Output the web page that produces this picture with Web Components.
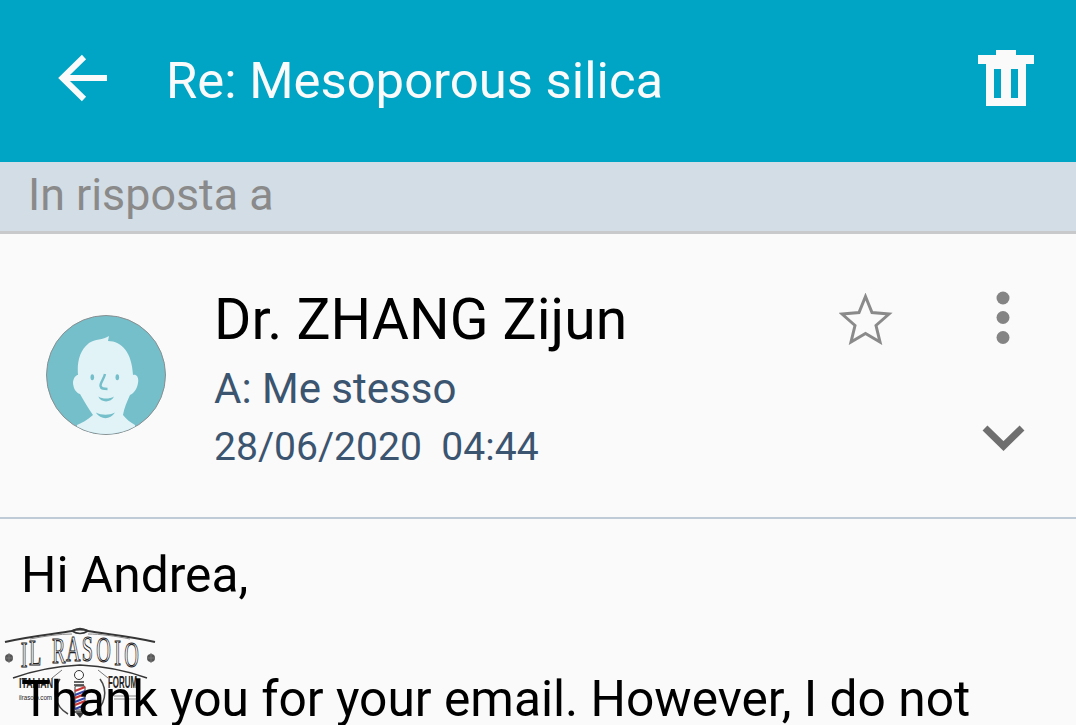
<!DOCTYPE html>
<html><head><meta charset="utf-8"><style>
html,body{margin:0;padding:0;background:#fafafa;overflow:hidden;height:725px}
body{font-family:Roboto,sans-serif}
</style></head><body>
<mail-screen></mail-screen>
<script>
function def(name,html){customElements.define(name,class extends HTMLElement{constructor(){super();this.attachShadow({mode:'open'}).innerHTML=html;}});}
def('app-bar',`<style>:host{display:flex;align-items:center;height:162px;background:#00a5c5;color:#fafafa;box-sizing:border-box;padding:0 42px 0 58px}
svg{display:block;flex:none}.t{font-size:50.800px;flex:1;white-space:nowrap;position:relative;top:-1px;margin-left:59px}</style>
<svg width="49" height="48" viewBox="0 0 49 48" style="margin-top:-6px"><path d="M49 24H5M26 3L4.500 24L26 45" fill="none" stroke="#fafafa" stroke-width="6"/></svg>
<span class="t"><slot></slot></span>
<svg width="56" height="56" viewBox="0 0 56 56" style="margin-top:-6px"><path fill-rule="evenodd" fill="#fafafa" d="M18 0H38V5H56V14H48V56H8V14H0V5H18ZM16 19V48H23V19ZM33 19V48H40V19Z"/></svg>`);
def('reply-band',`<style>:host{display:flex;align-items:center;height:72px;box-sizing:border-box;background:#d3dde5;border-bottom:3px solid #c8c9ca;color:#8a8a8a;font-size:44.800px;padding:0 0 5px 28px;white-space:nowrap}</style><slot></slot>`);
def('user-avatar',`<style>:host{display:block;width:120px;height:120px}svg{display:block}</style>
<svg width="120" height="120" viewBox="0 0 120 120"><defs><clipPath id="c"><circle cx="60" cy="60" r="59"/></clipPath></defs>
<circle cx="60" cy="60" r="59.500" fill="#74bfca" stroke="#8a8f91" stroke-width="1"/>
<g clip-path="url(#c)"><path fill="#e2f3f7" d="M31 110C36 108 41 105 47 100C42 93 38 86 34 79C30 78 27 73 27 67C28 62 30 60 32 60C31 48 33 36 43 28C49 24 57 25 63 21L62 26C76 26 86 38 87 60C91 59 93 63 92 68C91 74 88 78 84 80C81 87 78 93 77 100C80 104 84 107 89 110L89 125H31Z"/>
<ellipse cx="46.300" cy="62.300" rx="1.800" ry="3" fill="#74bfca"/><ellipse cx="71.300" cy="62.300" rx="1.800" ry="3" fill="#74bfca"/>
<path d="M59 59C58 64 54 68 54.500 71C55 74 58 74 61.500 74" fill="none" stroke="#74bfca" stroke-width="2.400"/>
<path d="M52.300 81.500C57 84.300 63 84.300 68 81.500C65 88 55 88 52.300 81.500Z" fill="#74bfca"/>
<path d="M49.700 97.500C56 100.500 63 100.500 69 97.500C64 105 55 105 49.700 97.500Z" fill="#74bfca"/></g></svg>`);
def('header-actions',`<style>:host{display:block;position:relative;width:237px;height:283px;flex:none}svg{position:absolute;display:block}</style>
<svg style="left:0;top:59px" width="54" height="52" viewBox="0 0 54 52"><path d="M26.500 3.500L33 19.500L50 21L37 32.500L41 49L26.500 40.500L12 49L16 32.500L3 21L20 19.500Z" fill="none" stroke="#8a8a8a" stroke-width="3"/></svg>
<svg style="left:156px;top:56px" width="16" height="54" viewBox="0 0 16 54"><g fill="#848484"><circle cx="8" cy="8" r="6.500"/><circle cx="8" cy="27.500" r="6.500"/><circle cx="8" cy="47.500" r="6.500"/></g></svg>
<svg style="left:143px;top:190px" width="44" height="30" viewBox="0 0 44 30"><path d="M3 4L21.500 22L40 4" fill="none" stroke="#6f6f6f" stroke-width="7"/></svg>`);
def('message-header',`<style>:host{display:flex;height:285px;box-sizing:border-box;background:#fafafa;border-bottom:2px solid #bfcbd6;position:relative}
.a{width:166px;flex:none;padding:81px 0 0 46px;box-sizing:border-box}
.m{flex:1;min-width:0;padding-top:54px;margin-left:48px;white-space:nowrap;color:#3b5570}
.n{font-size:57px;color:#000;line-height:64px}
.to{font-size:42px;line-height:46px;margin-top:14px}
.d{font-size:39.100px;line-height:46px;margin-top:12px}</style>
<div class="a"><user-avatar></user-avatar></div>
<div class="m"><div class="n">Dr. ZHANG Zijun</div><div class="to">A: Me stesso</div><div class="d">28/06/2020&nbsp; 04:44</div></div>
<header-actions></header-actions>`);
def('message-body',`<style>:host{display:block;position:relative;z-index:1;padding:25px 0 0 21px;font-size:49.700px;line-height:62px;color:#000;white-space:nowrap}p{margin:0}p+p{margin-top:62px}</style><p>Hi Andrea,</p><p>Thank you for your email. However, I do not</p>`);
def('forum-logo',`<style>:host{display:block;position:absolute;left:0;top:610px;width:170px;height:115px;color:#222}
svg{display:block;overflow:visible;opacity:.99}
text{font-family:"Liberation Sans",sans-serif;fill:#222}
.big{font-family:"Liberation Serif",serif;fill:#fff;stroke:#222;stroke-width:1.100px;font-size:36px}</style>
<svg width="170" height="115" viewBox="0 0 170 115">
<path d="M5 32C30 26 55 24 72 21C76 19 84 19 88 21C105 24 130 26 155 32" fill="none" stroke="#333" stroke-width="2"/>
<path d="M72 24C60 24 45 26 30 29M88 24C100 24 115 26 130 29" fill="none" stroke="#888" stroke-width="1"/>
<path d="M72 21q8-5 16 0q-8 5-16 0Z" fill="none" stroke="#333" stroke-width="1.500"/>
<g transform="scale(.56 1)"><text class="big" x="37 52 93 118 146 172 204 222" y="57 55 53 51 51 52 55 57">ILRASOIO</text></g>
<g fill="#555"><circle cx="9" cy="48" r="4"/><circle cx="151" cy="48" r="4"/></g>
<g stroke="#777" stroke-width="1"><path d="M5 48h8M9 43v10M147 48h8M151 43v10"/></g>
<path d="M13 68C35 60 60 56 80 55C100 56 125 60 147 68" fill="none" stroke="#333" stroke-width="1.500"/>
<path d="M62 60l-10 8M98 60l10 8" stroke="#777"/>
<text x="19" y="78" font-size="15" textLength="34" lengthAdjust="spacingAndGlyphs" font-weight="700">ITALIAN</text>
<text x="108" y="78" font-size="17" textLength="29" lengthAdjust="spacingAndGlyphs" font-weight="700">FORUM</text>
<text x="19" y="90" font-size="7" textLength="33" lengthAdjust="spacingAndGlyphs">ilrasoio.com</text>
<path d="M114 86h22M114 89h22" stroke="#888" stroke-width="1"/>
<path d="M60 69C52 80 54 96 68 104M100 69C108 80 106 96 92 104" fill="none" stroke="#444" stroke-width="1.500"/>
<rect x="75" y="76" width="10" height="24" rx="1" fill="#fff" stroke="#333"/>
<path d="M75 81l10-4M75 88l10-4M75 95l10-4" stroke="#c33" stroke-width="2.200"/>
<path d="M75 85l10-4M75 92l10-4M75 99l10-4" stroke="#34a" stroke-width="2"/>
<circle cx="79" cy="65" r="4.500" fill="#fff" stroke="#333"/><path d="M74 72h10M74 75h10M74 102h10" stroke="#333" stroke-width="1.500"/><path d="M76 103l4 5l4-5" fill="#333"/>
</svg>`);
def('mail-screen',`<style>:host{display:block;position:relative;width:1076px;height:725px;overflow:hidden;background:#fafafa}</style>
<app-bar>Re: Mesoporous silica</app-bar><reply-band>In risposta a</reply-band><message-header></message-header><message-body></message-body><forum-logo></forum-logo>`);
</script></body></html>
